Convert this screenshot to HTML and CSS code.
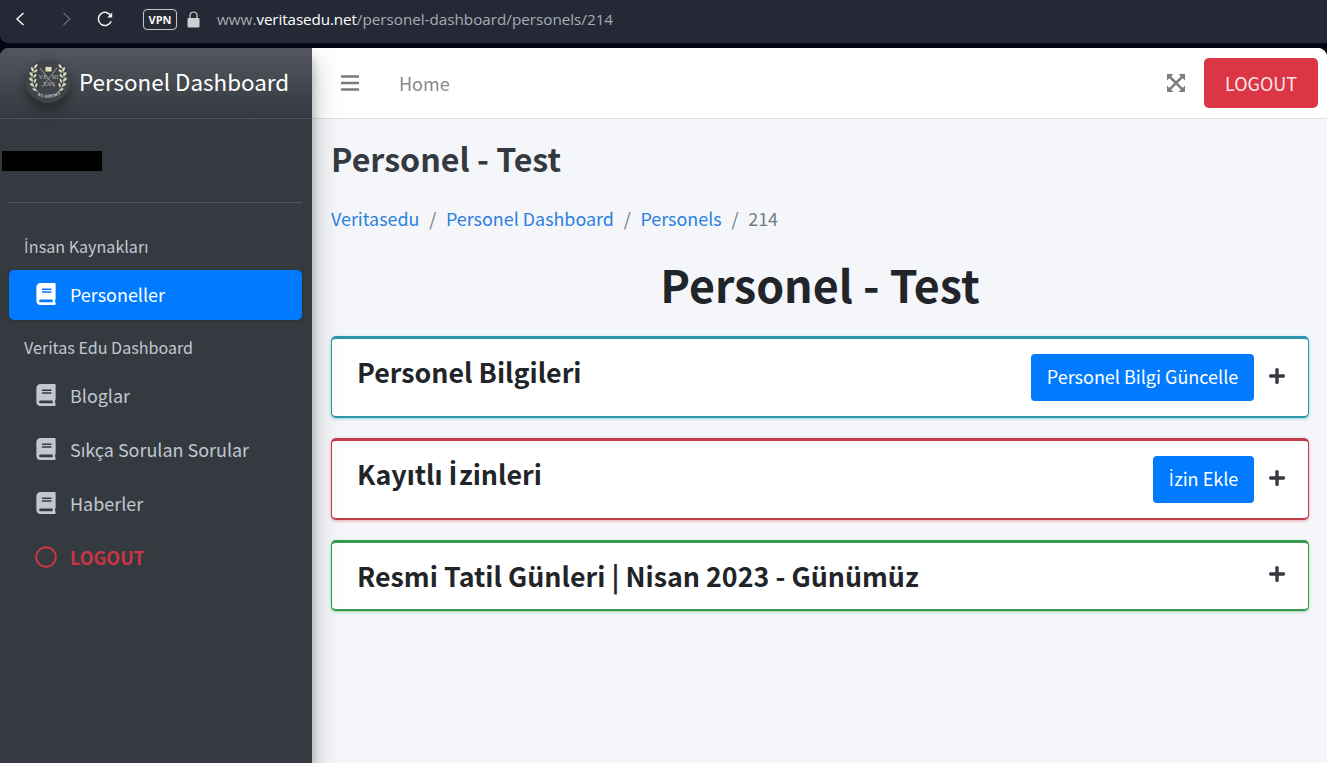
FILE: index.html
```html
<!DOCTYPE html>
<html lang="tr">
<head>
<meta charset="utf-8">
<title>Personel Dashboard</title>
<link rel="stylesheet" href="styles.css">
</head>
<body>
<svg class="defs" width="0" height="0" aria-hidden="true">
  <symbol id="book" viewBox="0 0 448 512"><path d="M448 360V24c0-13.300-10.700-24-24-24H96C43 0 0 43 0 96v320c0 53 43 96 96 96h328c13.300 0 24-10.700 24-24v-16c0-7.500-3.500-14.300-8.900-18.700-4.200-15.400-4.200-59.300 0-74.700 5.400-4.300 8.900-11.100 8.900-18.600zM128 134c0-3.300 2.700-6 6-6h212c3.300 0 6 2.700 6 6v20c0 3.300-2.700 6-6 6H134c-3.300 0-6-2.700-6-6v-20zm0 64c0-3.300 2.700-6 6-6h212c3.300 0 6 2.700 6 6v20c0 3.300-2.700 6-6 6H134c-3.300 0-6-2.700-6-6v-20zm253.400 250H96c-17.700 0-32-14.300-32-32 0-17.600 14.400-32 32-32h285.400c-1.900 17.100-1.900 46.900 0 64z"/></symbol>
  <symbol id="plus" viewBox="0 0 448 512"><path d="M416 208H272V64c0-17.670-14.330-32-32-32h-32c-17.670 0-32 14.330-32 32v144H32c-17.670 0-32 14.330-32 32v32c0 17.670 14.330 32 32 32h144v144c0 17.670 14.330 32 32 32h32c17.670 0 32-14.330 32-32V304h144c17.670 0 32-14.330 32-32v-32c0-17.670-14.330-32-32-32z"/></symbol>
  <symbol id="laurel" viewBox="0 0 12 34">
    <path d="M10 32C2 27 0 14 6 2" fill="none" stroke="#c9cbb0" stroke-width=".8"/>
    <g fill="#dadcc0"><ellipse cx="7" cy="2.500" rx="1.300" ry="2.600" transform="rotate(35 7 2.500)"/><ellipse cx="3" cy="6" rx="1.300" ry="2.600" transform="rotate(-25 3 6)"/><ellipse cx="6.800" cy="8" rx="1.200" ry="2.500" transform="rotate(45 6.800 8)"/><ellipse cx="1.600" cy="11.500" rx="1.300" ry="2.600" transform="rotate(-35 1.600 11.500)"/><ellipse cx="5.800" cy="13.500" rx="1.200" ry="2.500" transform="rotate(40 5.800 13.500)"/><ellipse cx="1.500" cy="17.500" rx="1.300" ry="2.600" transform="rotate(-45 1.500 17.500)"/><ellipse cx="6" cy="19" rx="1.200" ry="2.500" transform="rotate(25 6 19)"/><ellipse cx="2.500" cy="23.500" rx="1.300" ry="2.600" transform="rotate(-55 2.500 23.500)"/><ellipse cx="7.500" cy="24" rx="1.200" ry="2.500" transform="rotate(10 7.500 24)"/><ellipse cx="5.500" cy="29" rx="1.200" ry="2.600" transform="rotate(-65 5.500 29)"/></g>
  </symbol>
</svg>
<div class="browser">
  <div class="chrome">
    <svg class="back" width="10" height="14" viewBox="0 0 10 14"><path d="M8.500 1 2 7l6.500 6" fill="none" stroke="#f2f3f5" stroke-width="1.500"/></svg>
    <svg class="forward" width="10" height="14" viewBox="0 0 10 14"><path d="M1.500 1 8 7l-6.500 6" fill="none" stroke="#676b76" stroke-width="1.300"/></svg>
    <svg class="reload" width="17" height="16" viewBox="0 0 17 16"><path d="M14 5.200A6.600 6.600 0 1 0 14.200 10.200" fill="none" stroke="#f2f3f5" stroke-width="1.500"/><path d="M15.200 1.500v5h-5z" fill="#f2f3f5"/></svg>
    <span class="vpn">VPN</span>
    <svg class="lock" width="13" height="17" viewBox="0 0 13 17"><path d="M3 8V4.500a3.500 3.500 0 0 1 7 0V8" fill="none" stroke="#cdd0d1" stroke-width="1.200"/><rect x=".5" y="7" width="12" height="9.500" rx="1" fill="#cdd0d1"/></svg>
    <span class="url">www.<b>veritasedu.net</b>/personel-dashboard/personels/214</span>
  </div>
  <div class="app">
    <aside class="sidebar">
      <div class="brand">
        <svg class="logo" width="44" height="44" viewBox="0 0 44 44">
          <circle cx="22" cy="22" r="22" fill="#41454a"/>
          <use href="#laurel" x="3" y="5" width="12" height="30"/>
          <use href="#laurel" x="3" y="5" width="12" height="30" transform="translate(44 0) scale(-1 1)"/>
          <path d="m14 9 15 19M31 9 16 28" stroke="#a5a8aa" stroke-width=".9"/>
          <path d="M19.500 8c1.500-.6 2.500-.3 3 .3.500-.6 1.500-.9 3-.3v4.500h-6z" fill="#dfe0b4"/>
          <text class="crest" x="12.500" y="20">VE</text><text class="crest" x="26" y="20">RI</text><text class="crest" x="17" y="26.500">TAS</text>
          <path id="arc" d="M11 36Q22 42 35 35" fill="none"/>
          <text class="motto"><textPath href="#arc">ACADEMY</textPath></text>
        </svg>
        <span class="brand-name">Personel Dashboard</span>
      </div>
      <div class="user"><span class="redacted"></span></div>
      <nav class="menu">
        <div class="group"><span class="cap">İ</span>nsan Kaynakları</div>
        <a class="item active"><svg class="icon"><use href="#book"/></svg><span>Personeller</span></a>
        <div class="group second">Veritas Edu Dashboard</div>
        <a class="item"><svg class="icon"><use href="#book"/></svg><span>Bloglar</span></a>
        <a class="item"><svg class="icon"><use href="#book"/></svg><span>Sıkça Sorulan Sorular</span></a>
        <a class="item"><svg class="icon"><use href="#book"/></svg><span>Haberler</span></a>
        <a class="item danger"><svg class="icon" viewBox="0 0 22 22"><circle cx="11" cy="11" r="9.800" fill="none" stroke="currentColor" stroke-width="1.900"/></svg><span>LOGOUT</span></a>
      </nav>
    </aside>
    <main class="main">
      <header class="topbar">
        <svg class="bars" width="18" height="16" viewBox="0 0 18 16"><path d="M0 1.500h18M0 8h18M0 14.500h18" stroke="#7b7b7b" stroke-width="2.600"/></svg>
        <a class="home">Home</a>
        <svg class="expand" width="18" height="18" viewBox="0 0 18 18"><path d="m3 3 12 12M15 3 3 15" stroke="#7e7e7e" stroke-width="2.500"/><path d="M0 0h6.500L0 6.500zM18 0v6.500L11.500 0zM0 18v-6.500L6.500 18zM18 18h-6.500l6.500-6.500z" fill="#7e7e7e"/></svg>
        <a class="btn-logout">LOGOUT</a>
      </header>
      <div class="content">
        <h1 class="page-title">Personel - Test</h1>
        <div class="crumbs"><a>Veritasedu</a><i>/</i><a>Personel Dashboard</a><i>/</i><a>Personels</a><i>/</i><span>214</span></div>
        <h2 class="headline">Personel - Test</h2>
        <section class="card info"><h3>Personel Bilgileri</h3><a class="btn update">Personel Bilgi Güncelle</a><svg class="plus"><use href="#plus"/></svg></section>
        <section class="card leave"><h3>Kayıtlı <span class="cap">İ</span>zinleri</h3><a class="btn add"><span class="cap">İ</span>zin Ekle</a><svg class="plus"><use href="#plus"/></svg></section>
        <section class="card holiday"><h3>Resmi Tatil Günleri | Nisan 2023 - Günümüz</h3><svg class="plus"><use href="#plus"/></svg></section>
      </div>
    </main>
  </div>
</div>
</body>
</html>
```
FILE: styles.css
```css
* { box-sizing: border-box; }
body { margin: 0; overflow: hidden; font-family: "Noto Sans CJK SC", "Noto Sans", sans-serif; font-size: 18px; color: #212529; white-space: nowrap; }
svg { flex: none; display: block; }
.defs { position: absolute; }
h1, h2, h3 { margin: 0; font-weight: 700; }
/* Dotted capital I, which the main family lacks */
.cap { font-family: "Open Sans", sans-serif; line-height: 0; letter-spacing: .02em; }
h3 .cap { letter-spacing: .06em; }
.browser { height: 763px; display: flex; flex-direction: column; background: #020616; }
.chrome { height: 43px; margin-bottom: 5px; background: #252935; border-radius: 0 0 0 8px; display: flex; align-items: center; padding: 0 0 5px 15px; }
.forward { margin-left: 37px; }
.reload { margin-left: 25px; }
.vpn { margin-left: 29px; width: 34px; height: 21px; border: 1px solid #c5c7cc; border-radius: 4px; font: 700 11px/19px "Open Sans", sans-serif; text-align: center; color: #f5f5f7; }
.lock { margin-left: 10px; }
.url { margin-left: 17px; font: 400 15.230px/22px "Open Sans", sans-serif; color: #a8acb6; }
.url b { font-weight: 400; letter-spacing: -.1px; color: #fff; }

.app { flex: 1; display: flex; border-radius: 9px 9px 0 0; overflow: hidden; background: #f4f6f9; }
.sidebar { width: 312px; background: #343a40; box-shadow: 0 14px 28px rgba(0,0,0,.25), 0 10px 10px rgba(0,0,0,.22); z-index: 1; color: #c2c7d0; }
.brand { height: 71px; border-bottom: 1px solid #4b545c; background: linear-gradient(#53565e, #343a40); display: flex; align-items: center; padding: 0 0 4px 26px; }
.logo { border-radius: 50%; box-shadow: 0 7px 12px rgba(0,0,0,.35); }
.crest { font: 6.500px "Liberation Serif", serif; fill: #b4b7b9; }
.motto { font: 700 4.500px "Liberation Serif", serif; fill: #d8dadb; letter-spacing: .3px; }
.brand-name { margin-left: 9px; font-size: 22.400px; line-height: 30px; color: #fff; }
.user { height: 84px; margin: 0 10px 0 9px; border-bottom: 1px solid #50565d; padding-top: 32px; }
.redacted { display: block; width: 100px; height: 20px; margin-left: -7px; background: #000; }
.menu { padding: 25px 10px 0 9px; }
.group { height: 42px; padding: 5px 0 0 15px; font-size: 16.100px; line-height: 26px; }
.group.second { height: 47px; padding-top: 10px; }
.item { height: 50px; margin-bottom: 4px; border-radius: 5px; display: flex; align-items: center; padding: 0 0 2px 26px; }
.item span { margin-left: 13px; line-height: 28px; font-size: 17.950px; }
.icon { width: 22px; height: 22px; fill: currentColor; }
.active { background: #007bff; color: #fff; box-shadow: 0 1px 3px rgba(0,0,0,.24); }
.danger { color: #dc3545; font-weight: 700; opacity: .9; }

.main { flex: 1; min-width: 0; }
.topbar { height: 71px; background: #fff; border-bottom: 1px solid #dee2e6; display: flex; align-items: center; padding: 0 9px 0 29px; }
.home { margin-left: 40px; color: #8a8a8a; line-height: 28px; padding-bottom: 1px; }
.expand { margin-left: auto; }
.btn-logout { width: 114px; height: 50px; margin-left: 19px; background: #dc3545; border-radius: 5px; color: #f8e4e6; text-align: center; line-height: 51px; }
.content { padding: 19px 18px 0 19px; }
.page-title { font-size: 32.200px; line-height: 40px; color: #343a40; }
.crumbs { display: flex; height: 28px; margin-top: 26px; font-size: 17.900px; line-height: 28px; color: #737b82; }
.crumbs a { color: #2b80e2; }
.crumbs i { font-style: normal; margin: 0 9.800px; }
.headline { margin-top: 22px; height: 82px; text-align: center; font-size: 44.700px; line-height: 60px; }
.card { height: 82px; margin-bottom: 20px; border: 1px solid; border-top-width: 3px; border-bottom-width: 2px; border-radius: 5px; background: #fff; display: flex; align-items: flex-start; padding: 15px 23px 0 25px; }
.card h3 { font-size: 26.820px; line-height: 40px; margin-top: -2px; color: #212529; flex: 1; }
.info { border-color: #2e97a9; box-shadow: 0 1px 3px rgba(23,162,184,.4); }
.leave { border-color: #c43c4a; box-shadow: 0 1px 3px rgba(220,53,69,.4); }
.holiday { height: 71px; border-color: #36994f; box-shadow: 0 1px 3px rgba(40,167,69,.4); }
.btn { height: 47px; background: #007bff; border-radius: 4px; color: #fff; line-height: 45px; text-align: center; }
.update { width: 223px; }
.add { width: 101px; }
.plus { width: 16px; height: 18px; margin: 13px 0 0 15px; fill: #343a40; }
.holiday .plus { margin-top: 7px; }
```
